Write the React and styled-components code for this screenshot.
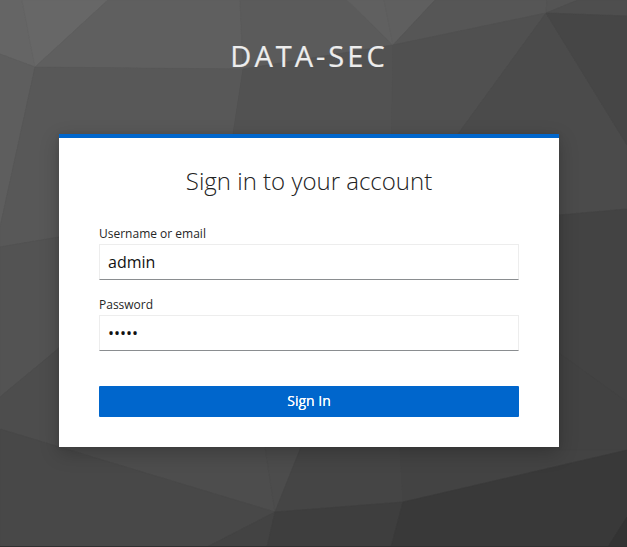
import React from "react";
import styled, { createGlobalStyle } from "styled-components";

const GlobalStyle = createGlobalStyle`
  *, *::before, *::after { box-sizing: border-box; }
  html, body { margin: 0; height: 100%; background: #484848; overflow: hidden; }
  body { font-family: "Open Sans", "Noto Sans", sans-serif; }
`;

const Page = styled.div`
  position: relative;
  isolation: isolate;
  width: 627px;
  height: 547px;
  display: flex;
  flex-direction: column;
  align-items: center;
  padding-right: 9px;
  overflow: hidden;
`;

const Backdrop = styled.svg`
  position: absolute;
  inset: 0;
  z-index: -1;
`;

const Brand = styled.header`
  height: 134px;
  padding-top: 37px;
  color: #ededed;
  font-size: 29px;
  line-height: 38px;
  letter-spacing: 3px;
  text-transform: uppercase;
  white-space: nowrap;
  -webkit-text-stroke: 0.2px #ededed;
`;

const Card = styled.main`
  width: 500px;
  height: 313px;
  padding: 24px 40px 30px;
  border-top: 4px solid #06c;
  background: #fff;
  box-shadow: 0 6px 18px rgba(3, 3, 3, 0.22), 0 0 5px rgba(3, 3, 3, 0.08);
`;

const Title = styled.h1`
  margin: 0 0 26px;
  color: #222;
  font-size: 24px;
  font-weight: 300;
  line-height: 38px;
  text-align: center;
`;

const Form = styled.form`
  display: flex;
  flex-direction: column;
`;

const Field = styled.div`
  display: flex;
  flex-direction: column;
  margin-bottom: 17px;
`;

const Label = styled.label`
  height: 18px;
  color: #262626;
  font-size: 12px;
  line-height: 15px;
`;

const Input = styled.input`
  width: 100%;
  height: 36px;
  margin-top: 0;
  padding: 5px 8px;
  border: 1px solid #ededed;
  border-bottom-color: #8a8d90;
  border-radius: 0;
  outline: none;
  background: #fff;
  color: #111;
  font: 16px/24px "Open Sans", "Noto Sans", sans-serif;
`;

const Submit = styled.button`
  height: 31px;
  margin-top: 18px;
  padding: 0 0 2px;
  border: 0;
  border-radius: 1px;
  background: #06c;
  color: #fff;
  font: 400 14px/29px "Open Sans", "Noto Sans", sans-serif;
  text-shadow: 0 0 0.4px #fff;
`;

const facets = [
  ["0,0 22,0 35,67 0,54", "#656565"],
  ["22,0 108,0 35,67", "#676767"],
  ["108,0 240,0 243,69 35,67", "#5f5f5f"],
  ["240,0 347,0 393,45 243,69", "#5b5b5b"],
  ["347,0 384,0 393,45", "#606060"],
  ["384,0 435,0 393,45", "#5f5f5f"],
  ["435,0 547,0 546,13 393,45", "#565656"],
  ["547,0 578,0 546,13", "#545454"],
  ["578,0 627,0 627,16 546,13", "#4e4e4e"],
  ["0,54 35,67 0,227", "#5e5e5e"],
  ["35,67 243,69 233,134 233,208 59,237 0,247 0,227", "#585858"],
  ["243,69 393,45 390,208 233,208 233,134", "#525252"],
  ["393,45 546,13 458,134 390,220", "#505050"],
  ["546,13 627,145 627,209 559,215 390,220 458,134", "#4b4b4b"],
  ["546,13 627,16 627,145", "#464646"],
  ["0,247 59,237 233,208 233,348 59,348 0,397", "#535353"],
  ["0,397 59,348 250,300 265,447 275,512 0,429", "#4d4d4d"],
  ["265,447 301,447 275,512", "#4c4c4c"],
  ["301,447 301,300 400,300 400,447 403,502 275,512", "#454545"],
  ["400,300 559,215 627,209 627,450 403,502 400,447", "#434343"],
  ["559,353 627,402 627,450 559,450", "#424242"],
  ["0,429 275,512 207,547 0,547", "#484848"],
  ["275,512 267,547 207,547", "#434343"],
  ["275,512 403,502 391,547 267,547", "#3e3e3e"],
  ["403,502 627,450 627,517 608,547 391,547", "#393939"],
  ["627,517 627,547 608,547", "#333333"],
];

function FacetedBackdrop() {
  return (
    <Backdrop width="627" height="547" viewBox="0 0 627 547" aria-hidden="true">
      {facets.map(([points, color]) => (
        <polygon key={points} points={points} fill={color} stroke={color} strokeWidth="0.6" />
      ))}
      <path d="M0 546.5H627" stroke="#303030" />
    </Backdrop>
  );
}

export default function App() {
  return (
    <>
      <GlobalStyle />
      <Page>
        <FacetedBackdrop />
        <Brand>Data-Sec</Brand>
        <Card>
          <Title>Sign in to your account</Title>
          <Form onSubmit={(event) => event.preventDefault()}>
            <Field>
              <Label htmlFor="username">Username or email</Label>
              <Input id="username" type="text" defaultValue="admin" />
            </Field>
            <Field>
              <Label htmlFor="password">Password</Label>
              <Input id="password" type="password" defaultValue="admin" />
            </Field>
            <Submit type="submit">Sign In</Submit>
          </Form>
        </Card>
      </Page>
    </>
  );
}
